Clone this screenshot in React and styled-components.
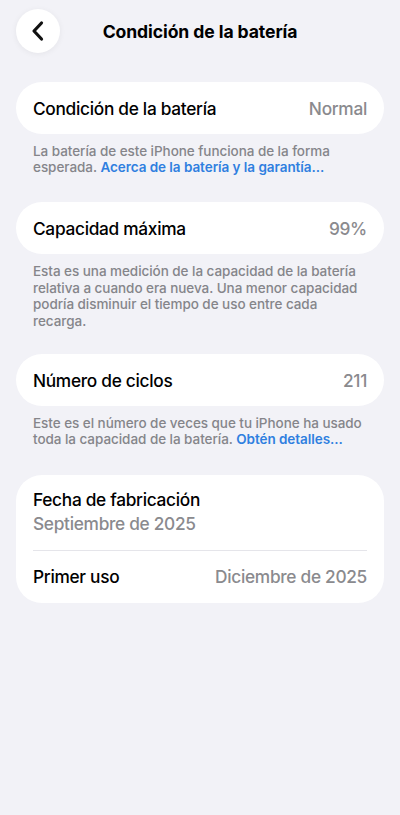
import React from "react";
import styled, { createGlobalStyle } from "styled-components";

const Global = createGlobalStyle`
  html, body {
    margin: 0;
    padding: 0;
    background: #f2f2f7;
    font-family: Inter, "Noto Sans", sans-serif;
    -webkit-font-smoothing: antialiased;
  }
`;

const Page = styled.div`
  width: 400px;
  min-height: 815px;
  background: #f2f2f7;
  box-sizing: border-box;
  padding: 9px 16px 0;
`;

const Header = styled.div`
  display: grid;
  grid-template-columns: 44px 1fr 44px;
  align-items: center;
  height: 44px;
  margin-bottom: 29px;
`;

const BackButton = styled.button`
  width: 44px;
  height: 44px;
  border-radius: 50%;
  border: none;
  background: #ffffff;
  box-shadow: 0 1px 6px rgba(0, 0, 0, 0.06);
  display: flex;
  align-items: center;
  justify-content: center;
  padding: 0;
`;

const Title = styled.h1`
  margin: 0;
  text-align: center;
  font-size: 17.6px;
  font-weight: 700;
  color: #000;
  letter-spacing: -0.1px;
  white-space: nowrap;
`;

const Card = styled.div`
  background: #ffffff;
  border-radius: 26px;
  padding: 0 17px;
`;

const Row = styled.div`
  display: flex;
  align-items: center;
  justify-content: space-between;
  height: 52px;
  font-size: 17.3px;
  line-height: 21px;
  letter-spacing: -0.3px;
`;

const Label = styled.span`
  color: #000;
  font-weight: 500;
`;

const Value = styled.span`
  color: #8a8a8e;
  font-weight: 500;
`;

const Stack = styled.div`
  display: flex;
  flex-direction: column;
  padding: 14.5px 0 15.5px;
  gap: 3px;
  font-size: 17.3px;
  line-height: 21px;
  letter-spacing: -0.3px;
`;

const Divider = styled.div`
  height: 1px;
  background: #e5e5ea;
`;

const Footer = styled.p`
  margin: 8.5px 22px ${(p) => p.$gap}px 17px;
  font-size: 13.5px;
  line-height: 16.7px;
  color: #85858a;
  font-weight: 500;
  letter-spacing: -0.05px;
`;

const Link = styled.a`
  display: inline-block;
  white-space: nowrap;
  color: #2f7fe0;
  font-weight: 600;
  text-decoration: none;
`;

const Chevron = () => (
  <svg width="14" height="22" viewBox="0 0 14 22">
    <path
      d="M10.5 3 L3 11 L10.5 19"
      fill="none"
      stroke="#111"
      strokeWidth="3.2"
      strokeLinecap="round"
      strokeLinejoin="round"
    />
  </svg>
);

export default function App() {
  return (
    <Page>
      <Global />
      <Header>
        <BackButton aria-label="Atrás">
          <Chevron />
        </BackButton>
        <Title>Condición de la batería</Title>
        <span />
      </Header>

      <Card>
        <Row>
          <Label>Condición de la batería</Label>
          <Value>Normal</Value>
        </Row>
      </Card>
      <Footer $gap={26.5}>
        La batería de este iPhone funciona de la forma esperada.{" "}
        <Link>Acerca de la batería y la garantía...</Link>
      </Footer>

      <Card>
        <Row>
          <Label>Capacidad máxima</Label>
          <Value>99%</Value>
        </Row>
      </Card>
      <Footer $gap={24.5}>
        Esta es una medición de la capacidad de la batería relativa a cuando
        era nueva. Una menor capacidad podría disminuir el tiempo de uso entre
        cada recarga.
      </Footer>

      <Card>
        <Row>
          <Label>Número de ciclos</Label>
          <Value>211</Value>
        </Row>
      </Card>
      <Footer $gap={26.5}>
        Este es el número de veces que tu iPhone ha usado toda la capacidad de
        la batería. <Link>Obtén detalles...</Link>
      </Footer>

      <Card>
        <Stack>
          <Label>Fecha de fabricación</Label>
          <Value>Septiembre de 2025</Value>
        </Stack>
        <Divider />
        <Row>
          <Label>Primer uso</Label>
          <Value>Diciembre de 2025</Value>
        </Row>
      </Card>
    </Page>
  );
}
